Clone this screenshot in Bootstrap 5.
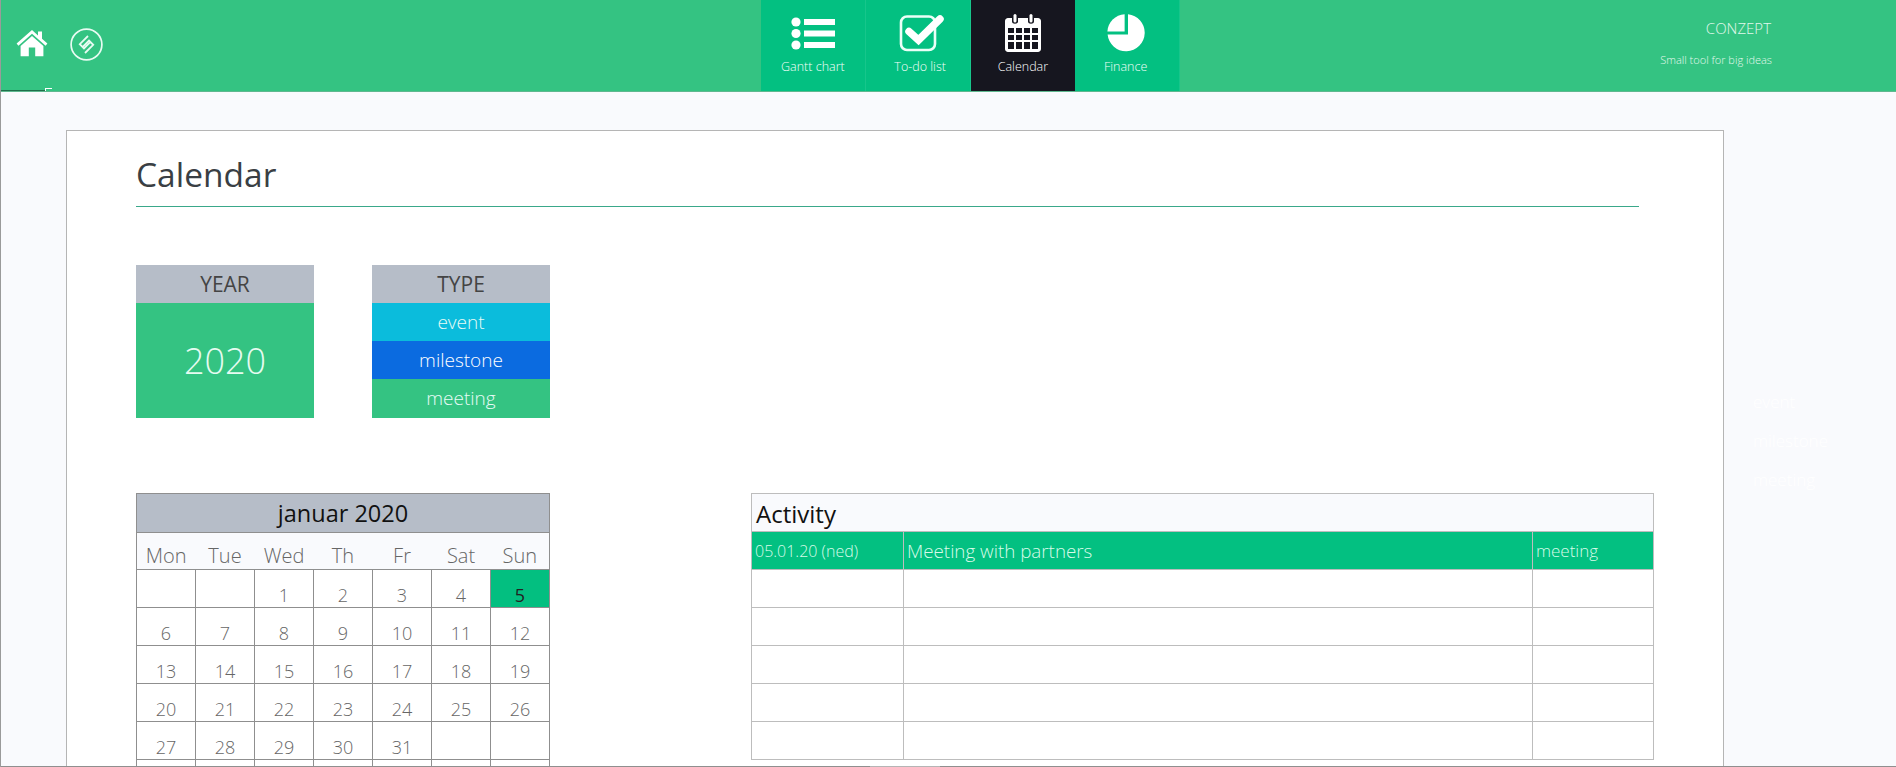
<!DOCTYPE html>
<html lang="en">
<head>
<meta charset="utf-8">
<title>Calendar</title>
<link href="https://cdn.jsdelivr.net/npm/bootstrap@5.3.0/dist/css/bootstrap.min.css" rel="stylesheet">
<style>
html,body{height:767px;overflow:hidden;margin:0}
body{background:#f9fafd;font-family:"Open Sans","Liberation Sans",sans-serif;font-weight:300;color:#444;position:relative;border-left:1px solid #9a9a9a}
.topbar{height:92px;background:#34c382;border-bottom:1px solid #5fb88f;position:relative}
.brand-icons{width:760px;padding:29px 0 0 15px;gap:22px}
.tabs{width:419px}
.tab-item{width:105px;height:91px;background:#03c081;color:#f4fffa;font-size:12.5px;text-decoration:none;padding-top:14px;border-right:1px solid #17c68b}
.tab-item.is-on{background:#16161f;color:#fff;border-right:0}
.tab-item svg{height:38px;display:block;margin-bottom:6px}
.tab-item span{line-height:18px}
.tab-todo{padding-left:5px}
.tab-todo svg{margin-left:3px}
.tab-fin{padding-right:3px}
.brand-text{width:593px;padding:18px 0 0 0;color:#e2f8ec;text-align:right}
.brand-name{font-size:15px;line-height:21px;margin-bottom:12px;padding-right:125px}
.brand-tag{font-size:11px;line-height:18px;padding-right:124px}
.notch{position:absolute;left:0;bottom:0;width:44px;height:1px;background:#1f6f4b}
.notch-b{position:absolute;left:44px;bottom:0;width:7px;height:3px;border-top:1px solid #fff;border-left:1px solid #fff}
.sheet-wrap{padding:38px 0 0 65px}
.sheet{width:1658px;height:637px;overflow:hidden;background:#fff;border:1px solid #b5b5b5;padding:0 0 0 69px}
.sheet-title{font-size:33.5px;font-weight:400;line-height:48px;color:#3a3f44;margin:0;padding-top:19px;height:76px;width:1503px;border-bottom:1px solid #3aa88a}
.tiles{gap:58px;margin-top:58px}
.tile{width:178px}
.tile-head{height:38px;line-height:38px;background:#b6bdc8;color:#444;font-size:21px;font-weight:400;text-align:center}
.tile-year{height:115px;line-height:115px;background:#34c382;color:#e6fbf1;font-size:36px;text-align:center}
.tile-row{height:38px;line-height:38px;color:#e6fbf6;font-size:19px;text-align:center}
.tile-row.last{height:39px}
.bg-event{background:#0bbcdc}
.bg-mile{background:#0b6be0;color:#fff}
.bg-meet{background:#34c382}
.tables{gap:201px;margin-top:75px;align-items:flex-start}
.table.cal{width:414px;table-layout:fixed;margin:0;border-color:#8f8f8f;--bs-table-bg:#fff;--bs-table-color:#666}
.table.cal>:not(caption)>*>*{padding:0;height:38px;border:1px solid #8f8f8f;text-align:center;font-size:18px;line-height:24px;padding-top:12px;vertical-align:bottom;color:#666}
.table.cal>thead>tr:first-child>th{background:#b6bdc8;color:#111;font-size:23.5px;font-weight:400;padding-top:0;line-height:38px;height:39px}
.table.cal>thead>tr.days>th{background:#f9fafd;font-size:20px;font-weight:300;border-width:0 0 1px 0;height:37px;padding-top:9px;line-height:27px;color:#666}
.table.cal>thead>tr.days>th:first-child{border-left-width:1px}
.table.cal>thead>tr.days>th:last-child{border-right-width:1px}
.table.cal>tbody>tr>td.picked{background:#03bf80;color:#222;font-weight:400}
.table.act{width:903px;table-layout:fixed;margin:0;--bs-table-bg:#fff}
.table.act>:not(caption)>*>*{padding:0;height:38px;border:1px solid #bdbdbd}
.table.act>thead>tr>th{background:#f9fafd;color:#111;font-size:24px;font-weight:400;padding-left:4px;height:38px;line-height:34px;border-bottom-color:#bdbdbd}
.table.act>tbody>tr.hit>td{background:#03c081;color:#d8fbe9;font-size:18.8px;padding-left:3px;line-height:32px;vertical-align:middle}
.table.act>tbody>tr.hit>td.dt{font-size:16px}
.table.act>tbody>tr.hit>td.ty{font-size:17px}
.c-a{width:152px}
.c-c{width:121px}
.ghost{padding:252px 0 0 29px;color:#fff;font-size:17px;line-height:39px;width:130px;text-align:left}
.edge{position:absolute;left:-1px;right:0;bottom:0;height:1px;gap:70px}
.edge i{display:block;background:#8f8f8f;height:1px}
.edge i:first-child{width:870px}
.edge i:last-child{flex:1}
</style>
</head>
<body>
<header class="topbar d-flex">
  <div class="brand-icons d-flex align-items-start">
    <svg width="32" height="28" viewBox="0 0 32 28" aria-label="Home"><path fill="#fff" d="M16 1 0.6 14.6 2.4 16.8 16 4.8 29.6 16.8 31.4 14.6 26 9.8V2.5H22V6.4Z"/><path fill="#fff" d="M16 7 4.6 17V27.2H12.8V18.6H19.2V27.2H27.4V17Z"/></svg>
    <svg width="33" height="33" viewBox="0 0 33 33" aria-label="Logo" style="margin-top:-1px"><circle cx="16.5" cy="16.5" r="15.4" fill="none" stroke="#e8fbf2" stroke-width="1.7"/><path fill="none" stroke="#e8fbf2" stroke-width="1.8" d="M18 8 9.8 16.2 14 20.4 20 14.4M15 25 23.2 16.8 19 12.6 13 18.6"/></svg>
  </div>
  <nav class="tabs d-flex">
    <a class="tab-item d-flex flex-column align-items-center" href="#">
      <svg width="44" viewBox="0 0 44 38"><g fill="#fff"><circle cx="5" cy="8" r="4.6"/><circle cx="5" cy="19.5" r="4.6"/><circle cx="5" cy="31" r="4.6"/><rect x="13" y="5" width="31" height="6"/><rect x="13" y="16.5" width="31" height="6"/><rect x="13" y="28" width="31" height="6"/></g></svg>
      <span>Gantt chart</span>
    </a>
    <a class="tab-item tab-todo d-flex flex-column align-items-center" href="#">
      <svg width="46" viewBox="0 0 46 38"><rect x="2" y="2.5" width="34" height="33.5" rx="6" fill="none" stroke="#eafff7" stroke-width="2.6"/><path fill="none" stroke="#fff" stroke-width="7.5" stroke-linecap="round" stroke-linejoin="miter" d="M10 17.5 19.5 26 41 5"/></svg>
      <span>To-do list</span>
    </a>
    <a class="tab-item is-on d-flex flex-column align-items-center" href="#">
      <svg width="36" viewBox="0 0 36 38"><path fill="#fff" fill-rule="evenodd" d="M3 4H7V7.5C7 10.5 13 10.5 13 7.5V4H23V7.5C23 10.5 29 10.5 29 7.5V4H33C34.6 4 36 5.4 36 7V35C36 36.6 34.6 38 33 38H3C1.4 38 0 36.6 0 35V7C0 5.4 1.4 4 3 4ZM3 14V19H9V14ZM11 14V19H17V14ZM19 14V19H25V14ZM27 14V19H33V14ZM3 21V26H9V21ZM11 21V26H17V21ZM19 21V26H25V21ZM27 21V26H33V21ZM3 28V35H9V28ZM11 28V35H17V28ZM19 28V35H25V28ZM27 28V35H33V28Z"/><rect x="8.5" y="0" width="3" height="8.5" rx="1.5" fill="#fff"/><rect x="24.5" y="0" width="3" height="8.5" rx="1.5" fill="#fff"/></svg>
      <span>Calendar</span>
    </a>
    <a class="tab-item tab-fin d-flex flex-column align-items-center" href="#">
      <svg width="38" viewBox="0 0 38 38"><path fill="#fff" d="M21 .2A18.6 18.6 0 1 1 .6 20.6H21Z"/><path fill="#fff" d="M17.6 .2V17.4H.4A18.4 18.4 0 0 1 17.6 .2Z"/></svg>
      <span>Finance</span>
    </a>
  </nav>
  <div class="brand-text flex-grow-1">
    <div class="brand-name">CONZEPT</div>
    <div class="brand-tag">Small tool for big ideas</div>
  </div>
  <i class="notch"></i><i class="notch-b"></i>
</header>
<main class="sheet-wrap d-flex">
  <section class="sheet flex-shrink-0">
    <h1 class="sheet-title">Calendar</h1>
    <div class="tiles d-flex">
      <div class="tile">
        <div class="tile-head">YEAR</div>
        <div class="tile-year">2020</div>
      </div>
      <div class="tile">
        <div class="tile-head">TYPE</div>
        <div class="tile-row bg-event">event</div>
        <div class="tile-row bg-mile">milestone</div>
        <div class="tile-row last bg-meet">meeting</div>
      </div>
    </div>
    <div class="tables d-flex">
      <table class="table cal">
        <thead>
          <tr><th colspan="7">januar 2020</th></tr>
          <tr class="days"><th>Mon</th><th>Tue</th><th>Wed</th><th>Th</th><th>Fr</th><th>Sat</th><th>Sun</th></tr>
        </thead>
        <tbody>
          <tr><td></td><td></td><td>1</td><td>2</td><td>3</td><td>4</td><td class="picked">5</td></tr>
          <tr><td>6</td><td>7</td><td>8</td><td>9</td><td>10</td><td>11</td><td>12</td></tr>
          <tr><td>13</td><td>14</td><td>15</td><td>16</td><td>17</td><td>18</td><td>19</td></tr>
          <tr><td>20</td><td>21</td><td>22</td><td>23</td><td>24</td><td>25</td><td>26</td></tr>
          <tr><td>27</td><td>28</td><td>29</td><td>30</td><td>31</td><td></td><td></td></tr>
          <tr><td></td><td></td><td></td><td></td><td></td><td></td><td></td></tr>
        </tbody>
      </table>
      <table class="table act">
        <colgroup><col class="c-a"><col class="c-b"><col class="c-c"></colgroup>
        <thead><tr><th colspan="3">Activity</th></tr></thead>
        <tbody>
          <tr class="hit"><td class="dt">05.01.20 (ned)</td><td>Meeting with partners</td><td class="ty">meeting</td></tr>
          <tr><td></td><td></td><td></td></tr>
          <tr><td></td><td></td><td></td></tr>
          <tr><td></td><td></td><td></td></tr>
          <tr><td></td><td></td><td></td></tr>
          <tr><td></td><td></td><td></td></tr>
        </tbody>
      </table>
    </div>
  </section>
  <aside class="ghost">
    <div>event</div><div>milestone</div><div>meeting</div>
  </aside>
</main>
<div class="edge d-flex"><i></i><i></i></div>
</body>
</html>
